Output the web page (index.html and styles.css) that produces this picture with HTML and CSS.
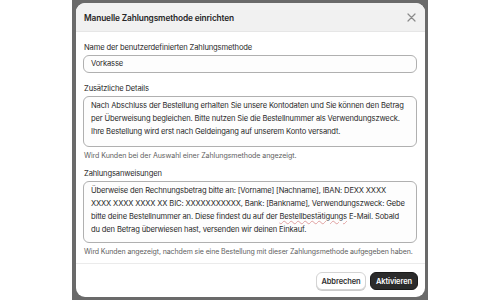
FILE: index.html
```html
<!DOCTYPE html>
<html lang="de">
<head>
<meta charset="utf-8">
<link rel="stylesheet" href="styles.css">
</head>
<body>
<div class="stage">
  <div class="overlay">
    <div class="modal">
      <div class="modal-header">
        <span class="title">Manuelle Zahlungsmethode einrichten</span>
        <svg class="close" width="9" height="9" viewBox="0 0 9 9"><path d="M1 1L8 8M8 1L1 8" stroke="#8a8a8a" stroke-width="1.2" stroke-linecap="round"/></svg>
      </div>
      <div class="modal-body">
        <div class="field">
          <div class="label">Name der benutzerdefinierten Zahlungsmethode</div>
          <div class="input">Vorkasse</div>
        </div>
        <div class="field">
          <div class="label">Zusätzliche Details</div>
          <div class="textarea ta1">Nach Abschluss der Bestellung erhalten Sie unsere Kontodaten und Sie können den Betrag per Überweisung begleichen. Bitte nutzen Sie die Bestellnummer als Verwendungszweck. Ihre Bestellung wird erst nach Geldeingang auf unserem Konto versandt.</div>
          <div class="help">Wird Kunden bei der Auswahl einer Zahlungsmethode angezeigt.</div>
        </div>
        <div class="field">
          <div class="label">Zahlungsanweisungen</div>
          <div class="textarea ta2">Überweise den Rechnungsbetrag bitte an: [Vorname] [Nachname], IBAN: DEXX XXXX<br>XXXX XXXX XXXX XX BIC: XXXXXXXXXXX, Bank: [Bankname], Verwendungszweck: Gebe<br>bitte deine Bestellnummer an. Diese findest du auf der <span class="spell">Bestellbestätigungs</span> E-Mail. Sobald<br>du den Betrag überwiesen hast, versenden wir deinen Einkauf.</div>
          <div class="help help-long">Wird Kunden angezeigt, nachdem sie eine Bestellung mit dieser Zahlungsmethode aufgegeben haben.</div>
        </div>
      </div>
      <div class="modal-footer">
        <button class="btn btn-secondary">Abbrechen</button>
        <button class="btn btn-primary">Aktivieren</button>
      </div>
    </div>
  </div>
</div>
</body>
</html>
```
FILE: styles.css
```css
* { box-sizing: border-box; }
html, body { margin: 0; padding: 0; background: #ffffff; }
body {
  font-family: Inter, "Liberation Sans", sans-serif;
  color: #303030;
}
.stage {
  width: 500px;
  height: 300px;
  display: flex;
  justify-content: center;
}
.overlay {
  width: 356px;
  height: 300px;
  background: #6a6a6a;
  padding: 3px 3px 3px 4px;
  display: flex;
}
.modal {
  flex: 1;
  background: #ffffff;
  border-radius: 9px;
  overflow: hidden;
  display: flex;
  flex-direction: column;
}
.modal-header {
  height: 29px;
  background: #f1f1f1;
  border-bottom: 1px solid #e6e6e6;
  display: flex;
  align-items: center;
  justify-content: space-between;
  padding: 1px 9px 0 8px;
}
.title {
  font-size: 8.3px;
  font-weight: 600;
  letter-spacing: -0.12px;
  color: #262626;
}
.close { display: block; }
.modal-body {
  flex: 1;
  padding: 9px 8px 0 7px;
  display: flex;
  flex-direction: column;
  border-bottom: 1px solid #ebebeb;
}
.field { display: flex; flex-direction: column; }
.field + .field { margin-top: 9px; }
.label {
  font-size: 7.6px;
  letter-spacing: -0.15px;
  line-height: 13px;
  color: #2a2a2a;
  margin-bottom: 1px;
  padding-left: 1px;
}
.input, .textarea {
  border: 1px solid #b0b0b0;
  border-radius: 6px;
  font-size: 7.6px;
  letter-spacing: -0.15px;
  line-height: 13px;
  color: #2a2a2a;
  padding: 0 3px 0 7px;
  background: #fdfdfd;
}
.input {
  height: 18px;
  line-height: 16px;
}
.textarea {
  padding-top: 2px;
}
.ta1 { height: 51px; }
.ta2 { height: 62px; }
.spell {
  text-decoration: underline wavy #e0a0a0;
  text-decoration-thickness: 1px;
  text-underline-offset: 1px;
}
.help {
  font-size: 7.1px;
  letter-spacing: -0.08px;
  line-height: 12px;
  color: #616161;
  margin-top: 3px;
  padding-left: 1px;
}
.help-long {
  font-size: 7px;
  letter-spacing: -0.1px;
  white-space: nowrap;
}
.field:nth-child(3) { margin-top: 5px; }
.modal-footer {
  height: 33px;
  display: flex;
  justify-content: flex-end;
  align-items: center;
  gap: 4px;
  padding: 1px 7px 0 0;
}
.btn {
  height: 18px;
  border-radius: 6px;
  font-family: Inter, "Liberation Sans", sans-serif;
  font-size: 7.5px;
  font-weight: 600;
  letter-spacing: -0.1px;
  padding: 0 4px;
  cursor: pointer;
}
.btn-secondary {
  background: #ffffff;
  color: #303030;
  border: 1px solid #d4d4d4;
  box-shadow: 0 1px 0 #cccccc;
  width: 50px;
}
.btn-primary {
  background: #2b2b2b;
  color: #ffffff;
  border: 1px solid #1a1a1a;
  width: 48px;
}
```
